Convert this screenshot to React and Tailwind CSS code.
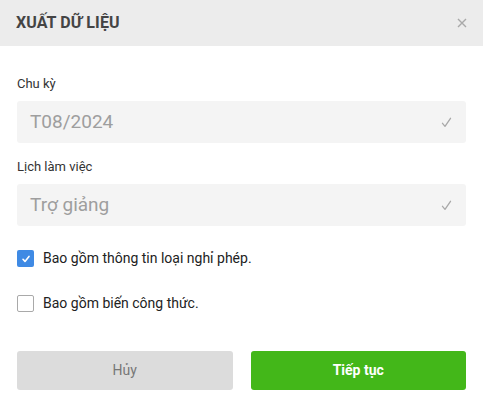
import React, { useState } from 'react';

const Field = ({ label, value }) => (
  <div>
    <p className="text-[13px] text-[#333] leading-4 mb-[9px]">{label}</p>
    <div className="flex items-center justify-between h-[42px] bg-[#f4f4f4] rounded-[3px] pl-[13px] pr-[14px]">
      <span className="text-[19px] text-[#9e9e9e]">{value}</span>
      <svg width="11" height="11" viewBox="0 0 11 11" fill="none">
        <path d="M1.5 6.3 L4 9.3 L9.5 1.3" stroke="#a8a8a8" strokeWidth="1.3" strokeLinecap="round" strokeLinejoin="round" />
      </svg>
    </div>
  </div>
);

const CheckRow = ({ checked, label, onToggle }) => (
  <label className="flex items-center gap-[9px] cursor-pointer" onClick={onToggle}>
    {checked ? (
      <span className="w-[17px] h-[17px] rounded-[2px] bg-[#3f8ae4] flex items-center justify-center">
        <svg width="10" height="10" viewBox="0 0 10 10" fill="none">
          <path d="M2 5.3 L4 7.4 L8 2.4" stroke="#fff" strokeWidth="1.6" strokeLinecap="round" strokeLinejoin="round" />
        </svg>
      </span>
    ) : (
      <span className="w-[17px] h-[17px] rounded-[2px] border border-[#a9a9a9] bg-white"></span>
    )}
    <span className="text-[14px] text-[#222]">{label}</span>
  </label>
);

export default function App() {
  const [leave, setLeave] = useState(true);
  const [formula, setFormula] = useState(false);

  return (
    <div className="w-[483px] h-[406px] bg-white" style={{ fontFamily: 'Roboto, "Noto Sans", sans-serif' }}>
      <div className="h-[46px] bg-[#ececec] flex items-center justify-between pl-[16px] pr-[16px]">
        <h1 className="text-[16px] font-bold text-[#444] tracking-[0.1px]">XUẤT DỮ LIỆU</h1>
        <svg width="10" height="10" viewBox="0 0 10 10" className="mt-[-1px]">
          <path d="M1 1 L9 9 M9 1 L1 9" stroke="#a9a9a9" strokeWidth="1.4" />
        </svg>
      </div>

      <div className="px-[17px] pt-[30px]">
        <Field label="Chu kỳ" value="T08/2024" />
        <div className="mt-[16px]">
          <Field label="Lịch làm việc" value="Trợ giảng" />
        </div>

        <div className="mt-[22px] flex flex-col gap-[24px]">
          <CheckRow checked={leave} label="Bao gồm thông tin loại nghỉ phép." onToggle={() => setLeave(!leave)} />
          <CheckRow checked={formula} label="Bao gồm biến công thức." onToggle={() => setFormula(!formula)} />
        </div>

        <div className="mt-[37px] flex gap-[18px]">
          <button className="flex-1 h-[39px] rounded-[3px] bg-[#dcdcdc] text-[14px] text-[#777]">Hủy</button>
          <button className="flex-1 h-[39px] rounded-[3px] bg-[#43b719] text-[14px] font-bold text-white">Tiếp tục</button>
        </div>
      </div>
    </div>
  );
}
